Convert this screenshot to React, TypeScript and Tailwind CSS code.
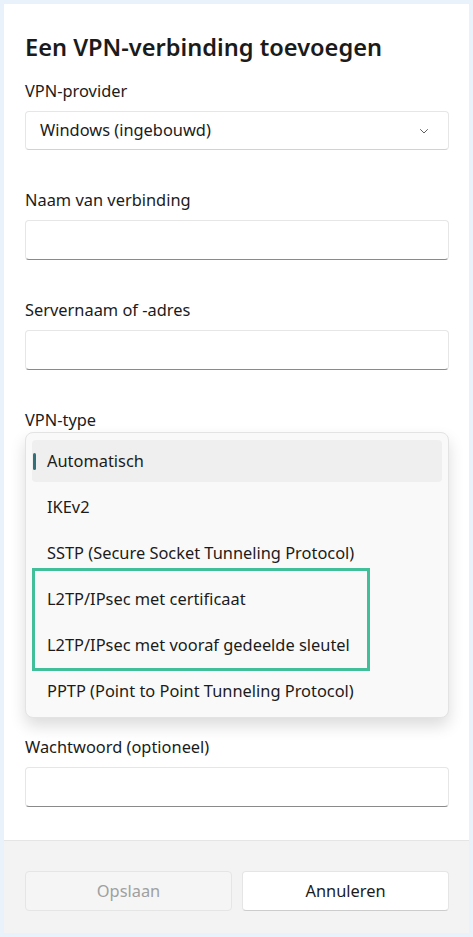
import React from 'react';

const font = { fontFamily: '"Segoe UI", "Noto Sans", "Open Sans", sans-serif' };

const Label = ({ children, className = '' }: { children?: React.ReactNode; className?: string }) => (
  <div className={`h-5 text-[16.4px] leading-5 text-[#1b1b1b] ${className}`}>{children}</div>
);

const TextBox = ({ className = '' }: { className?: string }) => (
  <div
    className={`h-10 rounded-[4px] border border-[#e6e6e6] border-b-[#8a8a8a] bg-white ${className}`}
  />
);

const Chevron = () => (
  <svg width="12" height="12" viewBox="0 0 12 12" className="text-[#5f5f5f]">
    <path d="M2.5 4.5 6 8l3.5-3.5" fill="none" stroke="currentColor" strokeWidth="1" strokeLinecap="round" strokeLinejoin="round" />
  </svg>
);

const options = [
  'Automatisch',
  'IKEv2',
  'SSTP (Secure Socket Tunneling Protocol)',
  'L2TP/IPsec met certificaat',
  'L2TP/IPsec met vooraf gedeelde sleutel',
  'PPTP (Point to Point Tunneling Protocol)',
];

export default function App() {
  return (
    <div className="min-h-[937px] bg-[#e9f2fa] p-[4px]" style={font}>
      <div className="flex h-[929px] flex-col bg-white">
        {/* Content */}
        <div className="flex flex-1 flex-col pl-[21px] pr-[20px] pt-[29px]">
          <h1 className="text-[23.6px] font-semibold leading-7 text-[#1b1b1b]">
            Een VPN-verbinding toevoegen
          </h1>

          <Label className="mt-5">VPN-provider</Label>
          <div className="mt-[10px] flex h-[39px] items-center justify-between rounded-[4px] border border-[#e6e6e6] border-b-[#d2d2d2] bg-white pl-[14px] pr-[18px]">
            <span className="text-[16.4px] text-[#1b1b1b]">Windows (ingebouwd)</span>
            <Chevron />
          </div>

          <Label className="mt-10">Naam van verbinding</Label>
          <TextBox className="mt-[10px]" />

          <Label className="mt-10">Servernaam of -adres</Label>
          <TextBox className="mt-[10px]" />

          <Label className="mt-10">VPN-type</Label>
          <div className="relative mt-[10px]">
            <div className="h-10 rounded-[4px] border border-[#e6e6e6] bg-white" />

            {/* Open dropdown */}
            <div className="absolute left-0 right-0 top-[-8px] z-10 rounded-[8px] border border-[#e3e3e3] bg-[#f9f9f9] px-[6px] pb-[3px] pt-[5px] shadow-[0_8px_16px_rgba(0,0,0,0.14)]">
              {options.map((opt, i) => (
                <div key={opt} className="h-[46px] py-[2px]">
                  <div
                    className={`relative flex h-[42px] items-center rounded-[4px] pl-[15px] text-[16.4px] text-[#1b1b1b] ${
                      i === 0 ? 'bg-[#efefef]' : ''
                    }`}
                  >
                    {i === 0 && (
                      <span className="absolute left-[1px] top-[13px] h-[17px] w-[3px] rounded-full bg-[#33707a]" />
                    )}
                    {opt}
                  </div>
                </div>
              ))}
              <div className="pointer-events-none absolute left-[6px] top-[135px] h-[103px] w-[338px] border-[3px] border-[#40bf98]" />
            </div>
          </div>

          {/* fields hidden under the open dropdown */}
          <Label className="mt-10" />
          <TextBox className="mt-[10px]" />

          <Label className="mt-10" />
          <TextBox className="mt-[10px]" />

          <Label className="mt-[37px]">Wachtwoord (optioneel)</Label>
          <TextBox className="mt-[10px]" />
        </div>

        {/* Footer */}
        <div className="flex h-[93px] gap-[10px] border-t border-[#e5e5e5] bg-[#f3f3f3] pl-[21px] pr-[20px] pt-[30px]">
          <button className="h-10 flex-1 rounded-[4px] border border-[#e5e5e5] bg-[#f5f5f5] text-[16.4px] text-[#a0a0a0]">
            Opslaan
          </button>
          <button className="h-10 flex-1 rounded-[4px] border border-[#e5e5e5] border-b-[#cccccc] bg-white text-[16.4px] text-[#1b1b1b]">
            Annuleren
          </button>
        </div>
      </div>
    </div>
  );
}
